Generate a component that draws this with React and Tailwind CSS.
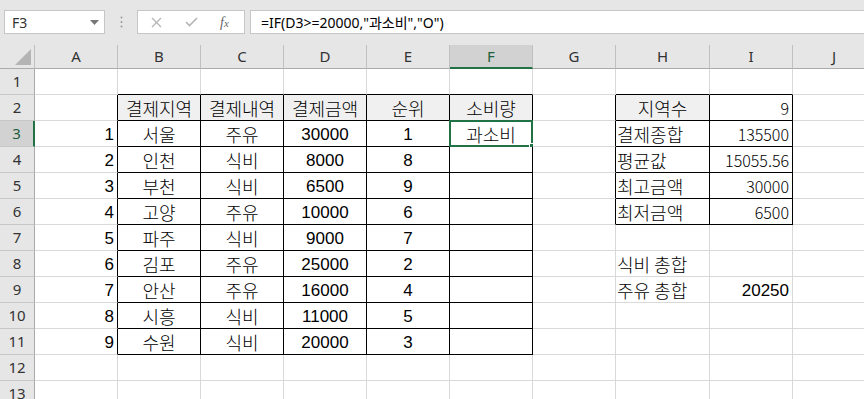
import React from 'react';

const COLS = ['A', 'B', 'C', 'D', 'E', 'F', 'G', 'H', 'I', 'J'];
const WIDTHS = ['w-[83px]', 'w-[83px]', 'w-[83px]', 'w-[83px]', 'w-[83px]', 'w-[83px]', 'w-[83px]', 'w-[94px]', 'w-[83px]', 'w-[83px]'];

// [text, kind]; kinds: k = korean centered, kl = korean left, n = number centered,
// nr = number right, ir = light number right
const DATA = {
  2: { 1: ['결제지역', 'kh'], 2: ['결제내역', 'kh'], 3: ['결제금액', 'kh'], 4: ['순위', 'kh'], 5: ['소비량', 'kh'], 7: ['지역수', 'kh'], 8: ['9', 'ir'] },
  3: { 0: ['1', 'nr'], 1: ['서울', 'k'], 2: ['주유', 'k'], 3: ['30000', 'n'], 4: ['1', 'n'], 5: ['과소비', 'k'], 7: ['결제종합', 'kl'], 8: ['135500', 'ir'] },
  4: { 0: ['2', 'nr'], 1: ['인천', 'k'], 2: ['식비', 'k'], 3: ['8000', 'n'], 4: ['8', 'n'], 7: ['평균값', 'kl'], 8: ['15055.56', 'ir'] },
  5: { 0: ['3', 'nr'], 1: ['부천', 'k'], 2: ['식비', 'k'], 3: ['6500', 'n'], 4: ['9', 'n'], 7: ['최고금액', 'kl'], 8: ['30000', 'ir'] },
  6: { 0: ['4', 'nr'], 1: ['고양', 'k'], 2: ['주유', 'k'], 3: ['10000', 'n'], 4: ['6', 'n'], 7: ['최저금액', 'kl'], 8: ['6500', 'ir'] },
  7: { 0: ['5', 'nr'], 1: ['파주', 'k'], 2: ['식비', 'k'], 3: ['9000', 'n'], 4: ['7', 'n'] },
  8: { 0: ['6', 'nr'], 1: ['김포', 'k'], 2: ['주유', 'k'], 3: ['25000', 'n'], 4: ['2', 'n'], 7: ['식비 총합', 'kl'] },
  9: { 0: ['7', 'nr'], 1: ['안산', 'k'], 2: ['주유', 'k'], 3: ['16000', 'n'], 4: ['4', 'n'], 7: ['주유 총합', 'kl'], 8: ['20250', 'nr'] },
  10: { 0: ['8', 'nr'], 1: ['시흥', 'k'], 2: ['식비', 'k'], 3: ['11000', 'n'], 4: ['5', 'n'] },
  11: { 0: ['9', 'nr'], 1: ['수원', 'k'], 2: ['식비', 'k'], 3: ['20000', 'n'], 4: ['3', 'n'] },
};

const KIND = {
  k: "justify-center font-['Noto_Sans_CJK_KR',sans-serif] font-light text-[18px]",
  kh: "justify-center font-['Noto_Sans_CJK_KR',sans-serif] font-light text-[18px]",
  kl: "justify-start pl-[1px] font-['Noto_Sans_CJK_KR',sans-serif] font-light text-[18px]",
  n: "justify-center font-['Liberation_Sans',sans-serif] text-[17px]",
  nr: "justify-end pr-[3px] font-['Liberation_Sans',sans-serif] text-[17px]",
  ir: "justify-end pr-[3px] font-['Noto_Sans_CJK_KR',sans-serif] font-light text-[16px]",
};

function inTable(c, r) {
  return (c >= 1 && c <= 5 && r >= 2 && r <= 11) || (c >= 7 && c <= 8 && r >= 2 && r <= 6);
}

function Cell({ c, r }) {
  const item = DATA[r] && DATA[r][c];
  const right = inTable(c, r) || inTable(c + 1, r) ? 'border-r-black' : 'border-r-[#d9d9d9]';
  const bottom = inTable(c, r) || inTable(c, r + 1) ? 'border-b-black' : 'border-b-[#d9d9d9]';
  const fill = item && item[1] === 'kh' ? 'bg-[#f0f0f0]' : 'bg-white';
  const selected = c === 5 && r === 3;
  return (
    <div className={`relative shrink-0 ${WIDTHS[c]} h-[26px] border-r border-b ${right} ${bottom} ${fill} flex items-center leading-none text-black ${item ? KIND[item[1]] : ''}`}>
      {item && <span className="pt-[1px]">{item[0]}</span>}
      {selected && (
        <div className="absolute left-[-1px] top-[-1px] right-[-1px] bottom-[-1px] border-2 border-[#217346]">
          <div className="absolute right-[-4px] bottom-[-4px] w-[6px] h-[6px] bg-[#217346] border border-white" />
        </div>
      )}
    </div>
  );
}

export default function App() {
  const rows = Array.from({ length: 13 }, (_, i) => i + 1);
  return (
    <div className="w-[864px] h-[399px] overflow-hidden bg-white font-['Noto_Sans',sans-serif]">
      {/* Formula bar */}
      <div className="h-[45px] bg-[#e6e6e6] flex items-start pt-[10px] pl-[4px]">
        <div className="w-[101px] h-[24px] shrink-0 bg-white border border-[#c6c6c6] flex items-center justify-between pl-[7px] pr-[5px]">
          <span className="text-[14px] text-[#333]">F3</span>
          <svg width="9" height="5" viewBox="0 0 9 5"><path d="M0 0 L9 0 L4.5 5 Z" fill="#777" /></svg>
        </div>
        <div className="w-[32px] h-[24px] shrink-0 flex items-center justify-center">
          <svg width="3" height="12" viewBox="0 0 3 12">
            <circle cx="1.5" cy="1.5" r="1" fill="#9a9a9a" />
            <circle cx="1.5" cy="6" r="1" fill="#9a9a9a" />
            <circle cx="1.5" cy="10.5" r="1" fill="#9a9a9a" />
          </svg>
        </div>
        <div className="w-[108px] h-[24px] shrink-0 bg-white border border-[#c6c6c6] flex items-center">
          <svg className="ml-[13px]" width="11" height="11" viewBox="0 0 11 11"><path d="M1 1 L10 10 M10 1 L1 10" stroke="#b5b5b5" strokeWidth="1.3" /></svg>
          <svg className="ml-[23px]" width="13" height="10" viewBox="0 0 13 10"><path d="M1 5 L4.5 8.5 L12 1" stroke="#b5b5b5" strokeWidth="1.6" fill="none" /></svg>
          <span className="ml-[22px] text-[14px] italic font-['Liberation_Serif',serif] text-[#666]">f<span className="text-[11px]">x</span></span>
        </div>
        <div className="w-[620px] h-[24px] shrink-0 ml-[5px] bg-white border border-[#c6c6c6] flex items-center pl-[10px]">
          <span className="text-[14px] text-black font-['Noto_Sans','Noto_Sans_CJK_KR',sans-serif]">=IF(D3&gt;=20000,"과소비","O")</span>
        </div>
      </div>

      {/* Column headers */}
      <div className="flex h-[24px]">
        <div className="w-[35px] shrink-0 bg-[#e6e6e6] border-r border-b border-r-[#c0c0c0] border-b-[#ababab] flex items-end justify-end pr-[3px] pb-[3px]">
          <svg width="16" height="16" viewBox="0 0 16 16"><path d="M16 0 L16 16 L0 16 Z" fill="#b4b4b4" /></svg>
        </div>
        {COLS.map((col, c) =>
          c === 5 ? (
            <div key={col} className={`${WIDTHS[c]} shrink-0 bg-[#d2d2d2] border-r border-r-[#c0c0c0] border-b-2 border-b-[#217346] flex items-center justify-center text-[15px] text-[#1e5e3a]`}>{col}</div>
          ) : (
            <div key={col} className={`${WIDTHS[c]} shrink-0 bg-[#e6e6e6] border-r border-b border-r-[#c0c0c0] border-b-[#ababab] flex items-center justify-center text-[15px] text-[#333]`}>{col}</div>
          )
        )}
      </div>

      {/* Rows */}
      {rows.map((r) => (
        <div key={r} className="flex h-[26px]">
          {r === 3 ? (
            <div className="w-[35px] shrink-0 bg-[#d2d2d2] border-r-2 border-b border-r-[#217346] border-b-[#c6c6c6] flex items-center justify-center text-[15px] text-[#1e5e3a]">{r}</div>
          ) : (
            <div className="w-[35px] shrink-0 bg-[#e6e6e6] border-r border-b border-r-[#ababab] border-b-[#c6c6c6] flex items-center justify-center text-[15px] text-[#333]">{r}</div>
          )}
          {COLS.map((col, c) => (
            <Cell key={col} c={c} r={r} />
          ))}
        </div>
      ))}
    </div>
  );
}
